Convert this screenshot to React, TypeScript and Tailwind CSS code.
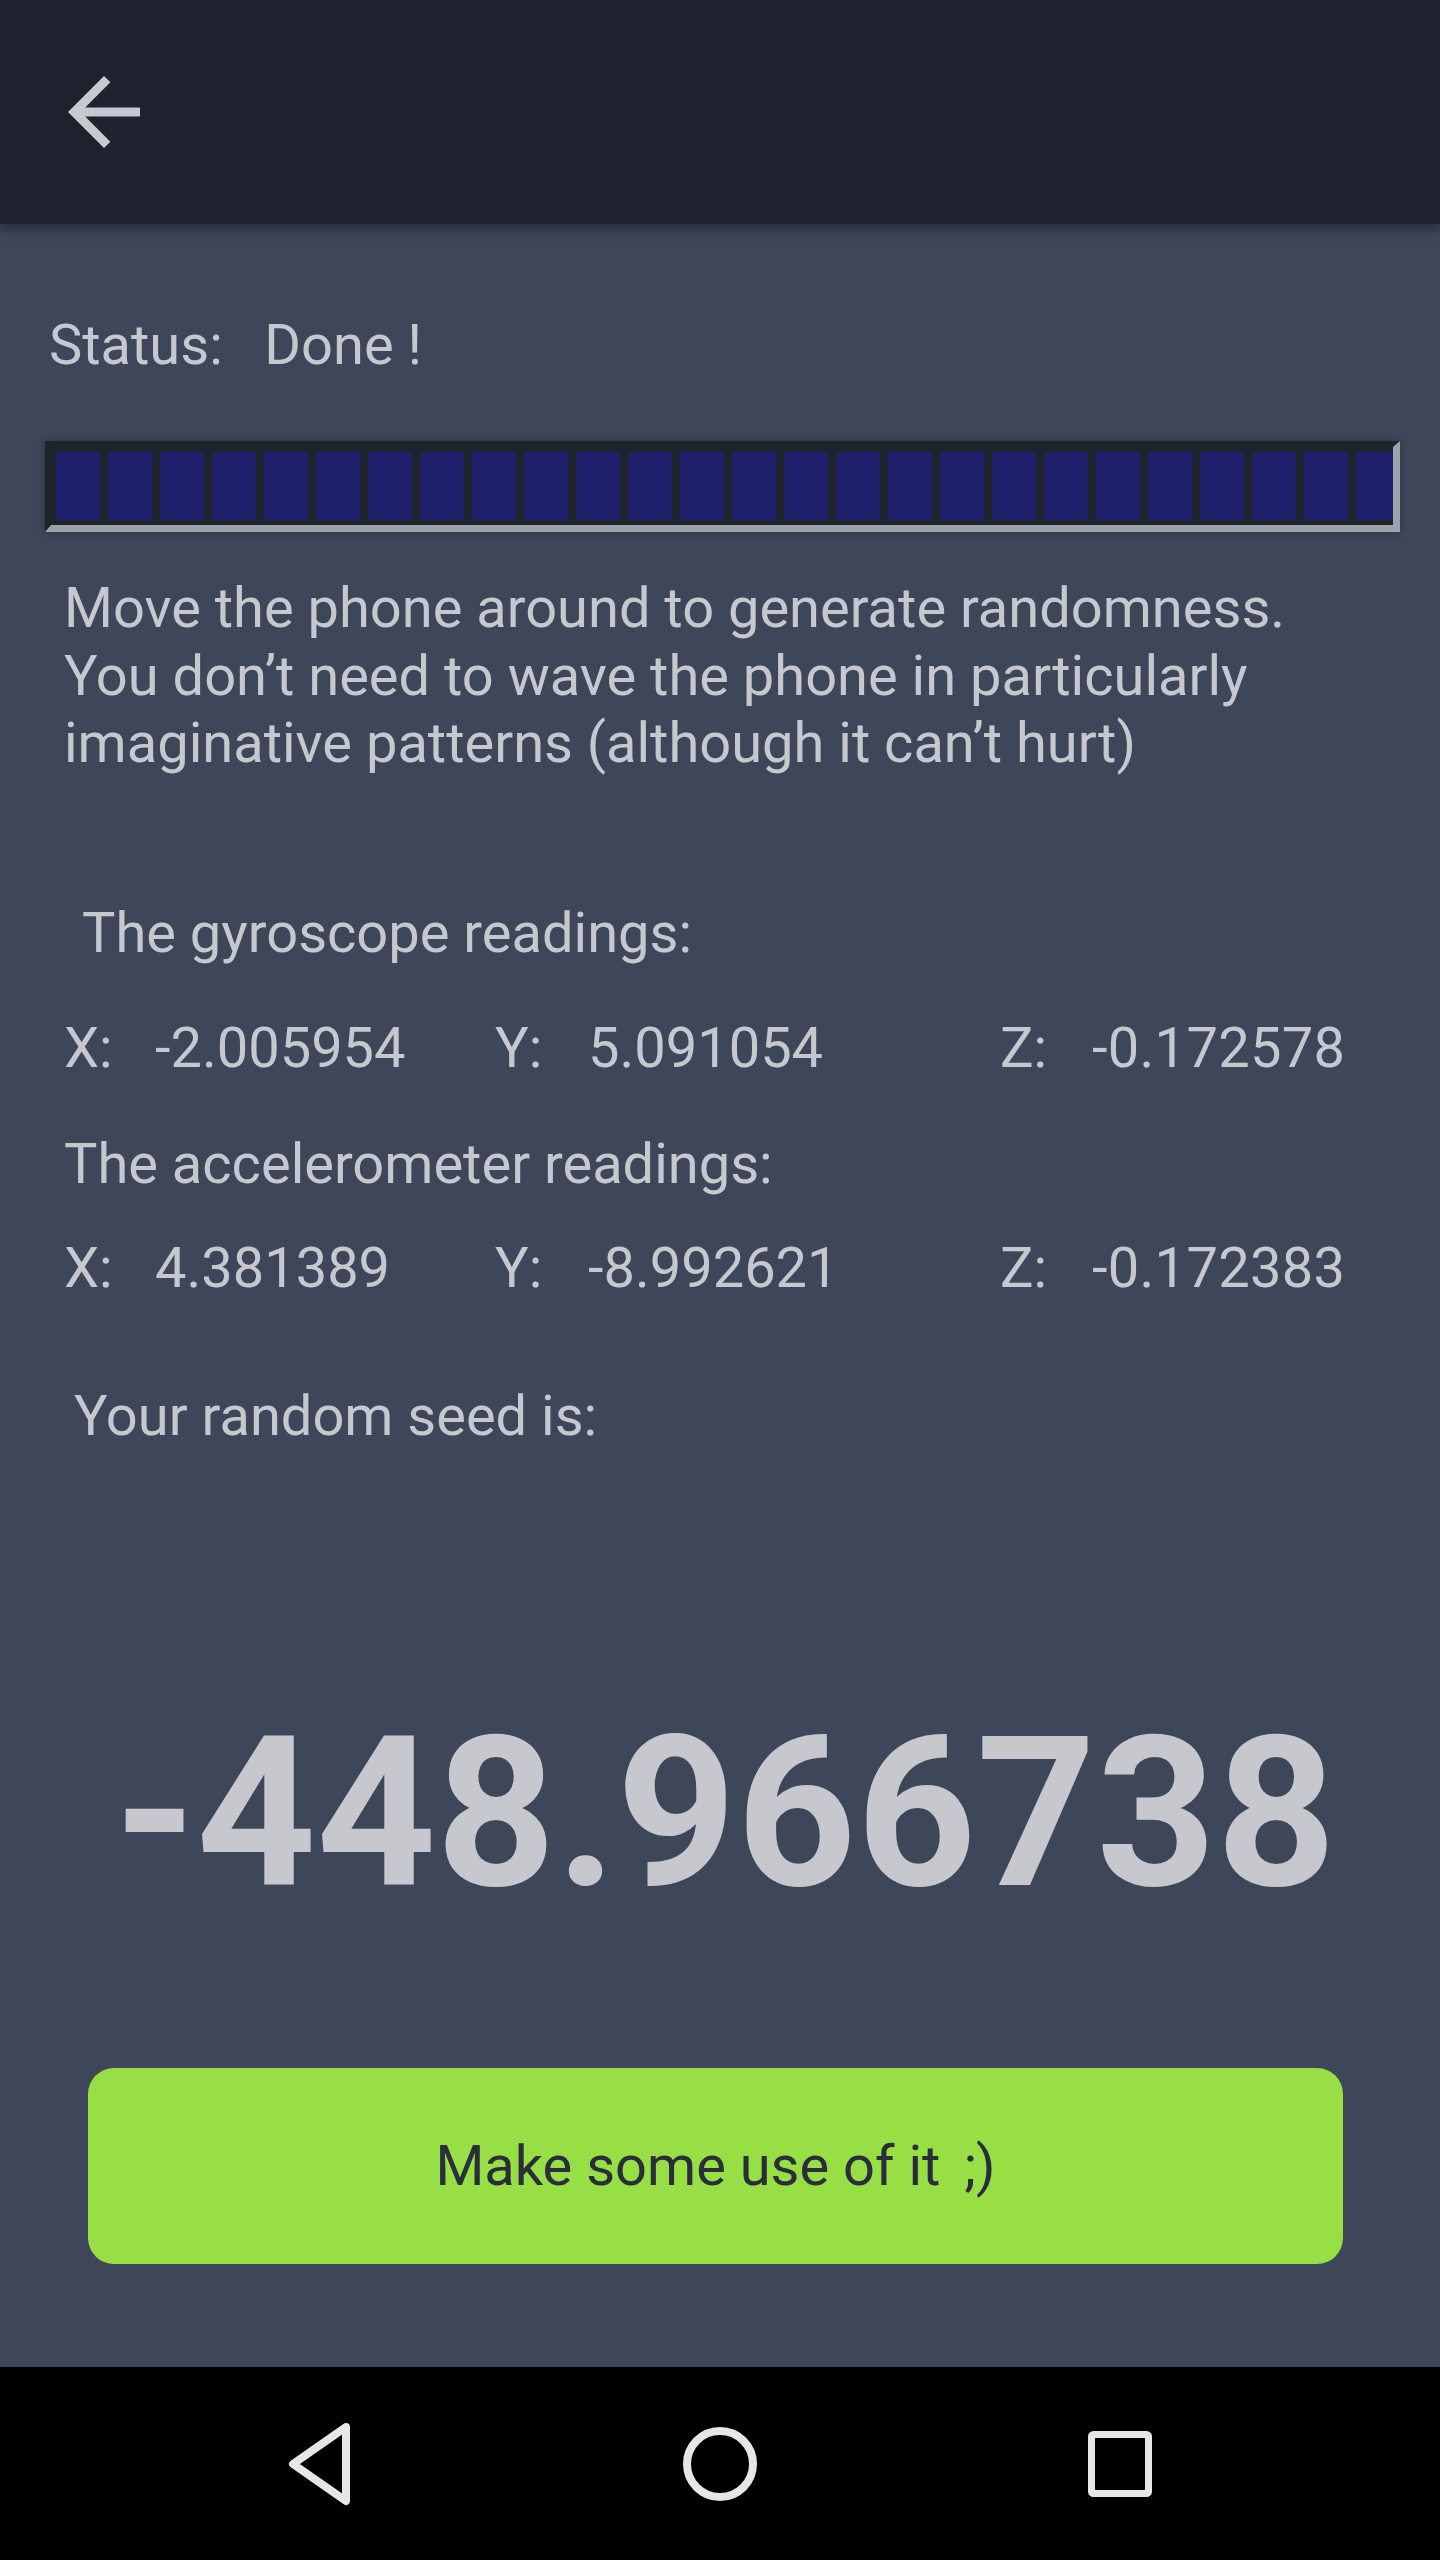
import React from "react";

const gyro = { x: "-2.005954", y: "5.091054", z: "-0.172578" };
const accel = { x: "4.381389", y: "-8.992621", z: "-0.172383" };

const Readings = ({ x, y, z }: { x: string; y: string; z: string }) => (
  <div className="flex pl-[64px]">
    <div className="flex w-[431px]">
      <span className="w-[91px]">X:</span>
      <span>{x}</span>
    </div>
    <div className="flex w-[505px]">
      <span className="w-[93px]">Y:</span>
      <span>{y}</span>
    </div>
    <div className="flex">
      <span className="w-[92px]">Z:</span>
      <span className="tracking-[0.3px]">{z}</span>
    </div>
  </div>
);

const App = () => {
  const segments = Array.from({ length: 26 });

  return (
    <div
      className="flex flex-col h-[2560px] w-[1440px] bg-[#3e4759] text-[#c6c8cd]"
      style={{ fontFamily: "Roboto, 'Noto Sans', sans-serif" }}
    >
      {/* Toolbar */}
      <header className="relative z-10 h-[224px] shrink-0 bg-[#1f2330] shadow-[0_6px_10px_rgba(0,0,0,0.35)]">
        <button className="absolute left-[50px] top-[58px] text-[#c8c9ce]">
          <svg width="108" height="108" viewBox="0 0 24 24" fill="currentColor">
            <path d="M20 11H7.83l5.59-5.59L12 4l-8 8 8 8 1.41-1.41L7.83 13H20v-2z" />
          </svg>
        </button>
      </header>

      <main className="flex-1 flex flex-col text-[56px] leading-[66px]">
        {/* Status */}
        <div className="mt-[88px] pl-[49px] whitespace-pre">Status:   Done !</div>

        {/* Progress bar */}
        <div className="mt-[63px] ml-[45px] w-[1355px] h-[91px] border-t-[6px] border-l-[6px] border-b-[7px] border-r-[7px] border-t-[#1f232c] border-l-[#1f232c] border-b-[#9ea2aa] border-r-[#9ea2aa] bg-[#1f232c] shadow-[0_0_8px_rgba(0,0,0,0.3)] pt-[5px] pl-[5px] pb-[5px] overflow-hidden">
          <div className="flex gap-[8px] h-full">
            {segments.map((_, i) => (
              <div key={i} className="w-[44px] h-full shrink-0 bg-[#1f206b]" />
            ))}
          </div>
        </div>

        {/* Instructions */}
        <p className="mt-[43px] pl-[64px] leading-[67.5px]">
          Move the phone around to generate randomness.
          <br />
          You don’t need to wave the phone in particularly
          <br />
          imaginative patterns (although it can’t hurt)
        </p>

        {/* Gyroscope */}
        <div className="mt-[122px] pl-[82px]">The gyroscope readings:</div>
        <div className="mt-[49px]">
          <Readings {...gyro} />
        </div>

        {/* Accelerometer */}
        <div className="mt-[50px] pl-[64px]">The accelerometer readings:</div>
        <div className="mt-[38px]">
          <Readings {...accel} />
        </div>

        {/* Seed */}
        <div className="mt-[82px] pl-[74px]">Your random seed is:</div>
        <div className="mt-[242px] pl-[10px] text-center text-[209px] leading-[246px] font-bold">
          -448.966738
        </div>

        <button className="mt-[131px] ml-[88px] w-[1255px] h-[196px] rounded-[26px] bg-[#98df45] text-[#2a2e3a] text-[56px]">
          Make some use of it <span className="ml-[10px]">;)</span>
        </button>
      </main>

      {/* Navigation bar */}
      <nav className="h-[193px] shrink-0 bg-black flex justify-center items-center text-[#e6e6e6]">
        <div className="w-[400px] flex justify-center">
          <svg width="72" height="84" viewBox="0 0 72 84" fill="none" stroke="currentColor" strokeWidth="8" strokeLinejoin="round">
            <path d="M62 5 L9 42 L62 79 Z" />
          </svg>
        </div>
        <div className="w-[400px] flex justify-center">
          <svg width="80" height="80" viewBox="0 0 80 80" fill="none" stroke="currentColor" strokeWidth="8">
            <circle cx="40" cy="40" r="33" />
          </svg>
        </div>
        <div className="w-[400px] flex justify-center">
          <svg width="66" height="68" viewBox="0 0 66 68" fill="none" stroke="currentColor" strokeWidth="7" strokeLinejoin="round">
            <rect x="4.5" y="4.5" width="57" height="59" rx="2" />
          </svg>
        </div>
      </nav>
    </div>
  );
};

export default App;
